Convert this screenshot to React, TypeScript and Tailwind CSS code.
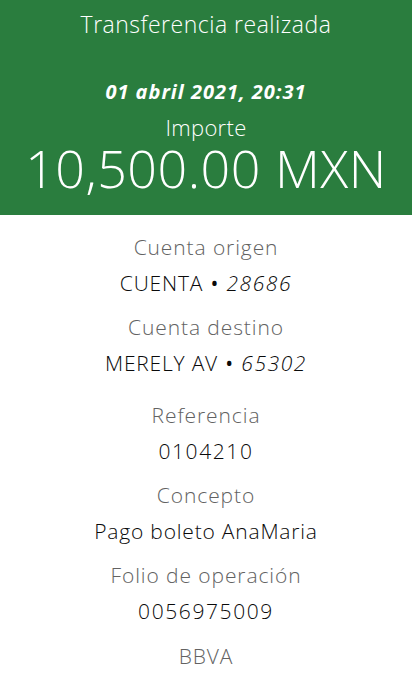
const font = { fontFamily: '"Open Sans", "Noto Sans", sans-serif' };

function Row({
  label,
  children,
  top,
  digits,
}: {
  label: string;
  children: React.ReactNode;
  top: string;
  digits?: boolean;
}) {
  return (
    <div className={`flex flex-col items-center gap-[8px] ${top}`}>
      <div className="text-[21px] font-light leading-[28px] tracking-[0.9px] text-[#626262]">{label}</div>
      <div
        className={`text-[21px] font-light leading-[28px] text-[#0a0a0a] ${
          digits ? 'tracking-[1.6px]' : 'tracking-[0.8px]'
        }`}
      >
        {children}
      </div>
    </div>
  );
}

function Dot() {
  return <span className="mx-[1px] font-normal">•</span>;
}

export default function App() {
  return (
    <div className="flex min-h-[676px] w-[412px] flex-col bg-white" style={font}>
      <header className="flex flex-col items-center bg-[#2a7d3e] pb-[19px] pt-[10px] text-white">
        <h1 className="text-[23px] font-light leading-[28px] tracking-[0.5px]">Transferencia realizada</h1>
        <div className="mt-[42px] text-[20px] font-bold italic leading-[24px] tracking-[1px]">
          01 abril 2021, 20:31
        </div>
        <div className="mt-[11px] text-[22px] font-light leading-[24px] tracking-[0.3px]">Importe</div>
        <div className="mt-[1px] text-[52px] font-light leading-[56px] tracking-[0.5px]">10,500.00 MXN</div>
      </header>
      <main className="flex flex-col">
        <Row label="Cuenta origen" top="mt-[18px]">
          CUENTA <Dot /> <span className="italic tracking-[1.6px]">28686</span>
        </Row>
        <Row label="Cuenta destino" top="mt-[16px]">
          MERELY AV <Dot /> <span className="italic tracking-[1.6px]">65302</span>
        </Row>
        <Row label="Referencia" top="mt-[24px]" digits>
          0104210
        </Row>
        <Row label="Concepto" top="mt-[16px]">
          Pago boleto AnaMaria
        </Row>
        <Row label="Folio de operación" top="mt-[16px]" digits>
          0056975009
        </Row>
        <div className="mt-[17px] text-center text-[21px] font-light leading-[28px] tracking-[0.9px] text-[#626262]">
          BBVA
        </div>
      </main>
    </div>
  );
}
